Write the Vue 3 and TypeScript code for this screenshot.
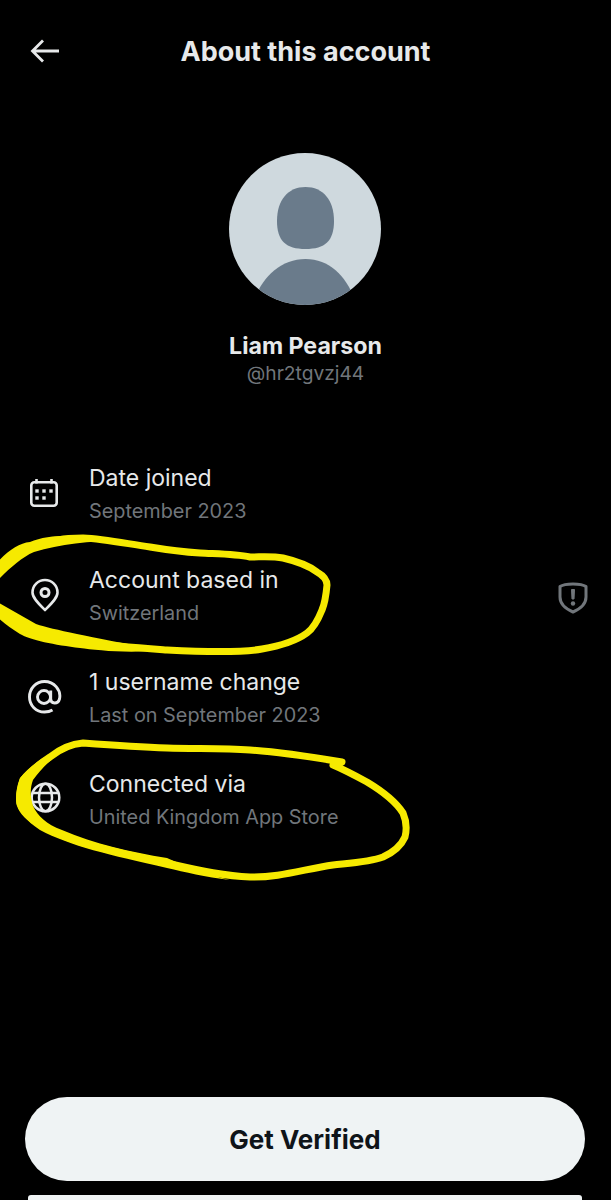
<script setup lang="ts">
interface InfoRow {
  icon: string;
  title: string;
  sub: string;
  flagged?: boolean;
}

const rows: InfoRow[] = [
  { icon: "calendar", title: "Date joined", sub: "September 2023" },
  { icon: "pin", title: "Account based in", sub: "Switzerland", flagged: true },
  { icon: "at", title: "1 username change", sub: "Last on September 2023" },
  { icon: "globe", title: "Connected via", sub: "United Kingdom App Store" },
];
</script>

<template>
  <div class="page">
    <header class="top-bar">
      <button class="back" aria-label="Back">
        <svg width="30" height="24" viewBox="0 0 30 24" fill="none" stroke="currentColor" stroke-width="2.8">
          <path d="M29 12H3M13 1.5 2.5 12 13 22.5" />
        </svg>
      </button>
      <h1 class="title">About this account</h1>
    </header>

    <section class="profile">
      <svg class="avatar" width="152" height="152" viewBox="0 0 152 152">
        <defs>
          <clipPath id="avatar-clip"><circle cx="76" cy="76" r="76" /></clipPath>
        </defs>
        <g clip-path="url(#avatar-clip)">
          <rect width="152" height="152" fill="#cfd9de" />
          <path
            d="M76.5 34C94 34 105 47 105 68C105 88 96 96 76.5 96C57 96 48 88 48 68C48 47 59 34 76.5 34Z"
            fill="#6a7b8b"
          />
          <path d="M76.5 106C100 106 117 123 125 145V160H26V145C34 123 53 106 76.5 106Z" fill="#6a7b8b" />
        </g>
      </svg>
      <div class="name">Liam Pearson</div>
      <div class="handle">@hr2tgvzj44</div>
    </section>

    <ul class="info-list">
      <li v-for="row in rows" :key="row.title" class="info-row">
        <span class="info-icon">
          <svg v-if="row.icon === 'calendar'" width="34" height="34" viewBox="0 0 34 34" fill="none" stroke="currentColor" stroke-width="2.6">
            <rect x="3.300" y="6.300" width="25.400" height="23.400" rx="3" />
            <path d="M8.500 3v4.500M23.500 3v4.500" />
            <g fill="currentColor" stroke="none">
              <rect x="7.300" y="13.300" width="3.400" height="3.400" />
              <rect x="14.300" y="13.300" width="3.400" height="3.400" />
              <rect x="21.300" y="13.300" width="3.400" height="3.400" />
              <rect x="7.300" y="20.300" width="3.400" height="3.400" />
              <rect x="14.300" y="20.300" width="3.400" height="3.400" />
            </g>
          </svg>
          <svg v-else-if="row.icon === 'pin'" width="34" height="34" viewBox="0 0 34 34" fill="none" stroke="currentColor" stroke-width="2.6">
            <path d="M17 32C11 26 4.500 20 4.500 14.500A12.500 12.500 0 0 1 29.500 14.500C29.500 20 23 26 17 32Z" stroke-linejoin="round" />
            <circle cx="17" cy="14.500" r="4" stroke-width="3" />
          </svg>
          <svg v-else-if="row.icon === 'at'" width="34" height="34" viewBox="0 0 34 34" fill="none" stroke="currentColor" stroke-width="2.900">
            <circle cx="16" cy="17" r="6.500" />
            <path d="M22.700 10.500V19C22.700 24 30 24.500 31.500 19C33.500 10 26 1.500 16.500 1.500C8 1.500 1.500 8.500 1.500 17C1.500 25.500 8 32 16.500 32C19.500 32 22 31.500 24.500 30" />
          </svg>
          <svg v-else width="34" height="34" viewBox="0 0 34 34" fill="none" stroke="currentColor" stroke-width="2.500">
            <circle cx="17.500" cy="15.500" r="13.800" />
            <ellipse cx="17.500" cy="15.500" rx="6.500" ry="13.800" />
            <path d="M4.500 11H30.500M4.500 20H30.500" />
          </svg>
        </span>
        <div class="info-text">
          <div class="info-title">{{ row.title }}</div>
          <div class="info-sub">{{ row.sub }}</div>
        </div>
        <svg v-if="row.flagged" class="shield" width="32" height="34" viewBox="0 0 32 34" fill="none">
          <path
            d="M3 6.500C8 3 24 3 29 6.500V17C29 24 23 29 16 32C9 29 3 24 3 17Z"
            stroke="#71767b"
            stroke-width="3"
            stroke-linejoin="round"
          />
          <path d="M14.500 9.500H17.500L17 19H15Z" fill="#71767b" stroke="#71767b" stroke-width="1" />
          <circle cx="16" cy="23.500" r="2.200" fill="#71767b" />
        </svg>
      </li>
    </ul>

    <footer class="actions">
      <button class="verify">Get Verified</button>
      <div class="next-button"></div>
    </footer>

    <!-- marker scribbles drawn over the screenshot -->
    <svg class="scribbles" width="611" height="1200" viewBox="0 0 611 1200" fill="none" stroke="#f6ea00" stroke-width="7" stroke-linecap="round" stroke-linejoin="round">
      <path d="M-4 575C6 562 18 552 30 547C48 540 66 538 83 538C105 539 128 544 150 547C168 550 184 552 200 553C220 554 236 554 250 557C262 557 272 556 283 558C296 561 308 565 317 572C324 576 327 580 327 585C326 596 325 603 322 610C318 620 314 628 307 633C296 641 280 646 262 649C240 653 205 652 167 650C140 648 112 646 90 643C68 639 48 636 33 630C20 624 8 616 -4 607" />
      <path d="M342 762C312 757 282 752 250 750C222 748 195 749 167 748C138 747 110 745 83 743C70 744 60 749 50 757C38 765 29 772 23 780C20 788 19 796 20 803C22 810 27 815 33 820C48 830 64 837 83 843C110 851 138 857 167 863C194 869 222 876 250 877C278 878 305 869 333 865C352 863 370 862 383 857C394 852 401 846 405 837C407 829 406 820 403 813C396 802 382 791 367 782C356 776 345 770 333 765" />
      <!-- heavier pressure on the left side of each loop -->
      <g fill="#f6ea00" stroke="none">
        <path d="M-6 566C6 552 18 543 30 542C50 534 80 534 120 541C90 541 60 544 34 552C20 558 8 570 -6 584Z" />
        <path d="M-6 600C8 608 22 616 36 624C55 630 85 636 160 650C130 654 95 650 80 648C55 645 30 640 20 634C10 628 0 620 -6 614Z" />
        <path d="M66 748C48 752 30 766 20 778C16 790 15 800 17 806C20 814 26 820 40 830C70 846 110 855 167 868C185 872 205 877 230 880C205 874 185 866 167 858C130 852 95 844 62 830C46 824 38 816 33 806C30 796 30 788 33 780C40 770 52 758 66 748Z" />
      </g>
    </svg>
  </div>
</template>

<style>
body {
  background: #000;
}
</style>

<style scoped>
.page {
  position: relative;
  display: flex;
  flex-direction: column;
  height: 1200px;
  overflow: hidden;
  background: #000;
  color: #e7e9ea;
  font-family: Inter, "Liberation Sans", sans-serif;
}

.top-bar {
  display: grid;
  grid-template-columns: 1fr auto 1fr;
  align-items: center;
  height: 102px;
  flex-shrink: 0;
}

.back {
  justify-self: start;
  display: flex;
  margin-left: 30px;
  padding: 0;
  background: none;
  border: none;
  color: #e7e9ea;
}

.title {
  margin: 0;
  font-size: 27px;
  font-weight: 700;
}

.profile {
  display: flex;
  flex-direction: column;
  align-items: center;
  margin-top: 51px;
}

.avatar {
  display: block;
  margin-right: 1px;
}

.name {
  margin-top: 27px;
  font-size: 23.200px;
  font-weight: 700;
  line-height: 29px;
}

.handle {
  font-size: 19.200px;
  line-height: 25px;
  color: #71767b;
}

.info-list {
  margin: 58px 0 0;
  padding: 0;
  list-style: none;
}

.info-row {
  display: flex;
  align-items: center;
  height: 102px;
  padding: 0 22px 0 28px;
}

.info-icon {
  display: flex;
  width: 34px;
  margin-right: 27px;
  margin-bottom: 4px;
}

.info-text {
  flex: 1;
}

.info-title {
  font-size: 23px;
  line-height: 32px;
}

.info-sub {
  margin-top: 1px;
  font-size: 19.850px;
  line-height: 33px;
  color: #71767b;
}

.actions {
  display: flex;
  flex-direction: column;
  margin-top: auto;
  padding-left: 25px;
}

.verify {
  width: 560px;
  height: 84px;
  border: none;
  border-radius: 42px;
  background: #eff3f4;
  color: #0f1419;
  font-family: inherit;
  font-size: 26px;
  font-weight: 700;
}

.next-button {
  width: 554px;
  height: 5px;
  margin: 14px 0 0 3px;
  background: #eff3f4;
  border-radius: 3px 3px 0 0;
}

.scribbles {
  position: absolute;
  top: 0;
  left: 0;
  pointer-events: none;
}
</style>
